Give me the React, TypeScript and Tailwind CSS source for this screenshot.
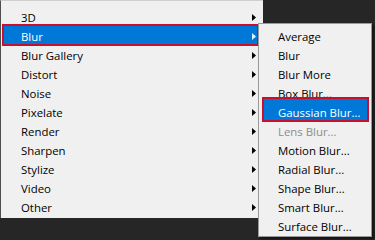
import React from "react";

const mainItems = ["3D", "Blur", "Blur Gallery", "Distort", "Noise", "Pixelate", "Render", "Sharpen", "Stylize", "Video", "Other"];
const subItems = ["Average", "Blur", "Blur More", "Box Blur...", "Gaussian Blur...", "Lens Blur...", "Motion Blur...", "Radial Blur...", "Shape Blur...", "Smart Blur...", "Surface Blur..."];

function Arrow({ light }: { light?: boolean }) {
  return (
    <svg width="4" height="7" viewBox="0 0 4 7" className="relative z-10 shrink-0">
      <path d="M0 0 L4 3.5 L0 7 Z" fill={light ? "#dff0ff" : "#000"} />
    </svg>
  );
}

export default function App() {
  return (
    <div
      className="relative w-[375px] h-[240px] bg-[#262626] overflow-hidden"
      style={{ fontFamily: '"Open Sans", "Noto Sans", sans-serif' }}
    >
      <div className="w-[263px] flex flex-col bg-[#f0f0f0] border-l border-l-[#4d4d4d] border-t border-t-[#cfcfcf] pt-[7px] pb-[1px]">
        {mainItems.map((it) => {
          const sel = it === "Blur";
          return (
            <div key={it} className="relative h-[19px] flex items-center justify-between pl-[20px] pr-[7px] text-[11.4px] leading-none">
              {sel && (
                <div className="absolute left-[1px] right-[4px] -top-[3px] bottom-0 bg-[#0078d7] border-2 border-[#c8102e]" />
              )}
              <span className={sel ? "relative z-10 text-white" : "text-black"}>{it}</span>
              <Arrow light={sel} />
            </div>
          );
        })}
      </div>

      <div className="absolute left-[258px] top-[23px] w-[114px] flex flex-col bg-[#f0f0f0] border border-[#9a9a9a] pt-[3px] shadow-[2px_2px_2px_rgba(0,0,0,0.5)]">
        {subItems.map((it) => {
          const sel = it === "Gaussian Blur...";
          const dis = it === "Lens Blur...";
          return (
            <div key={it} className="relative h-[19px] flex items-center pl-[19px] text-[11.4px] leading-none">
              {sel && (
                <div className="absolute left-[3px] right-[2px] -top-[6px] bottom-0 bg-[#0078d7] border-2 border-[#c8102e]" />
              )}
              <span className={sel ? "relative z-10 text-white" : dis ? "text-[#8d8d8d]" : "text-black"}>{it}</span>
            </div>
          );
        })}
      </div>
    </div>
  );
}
